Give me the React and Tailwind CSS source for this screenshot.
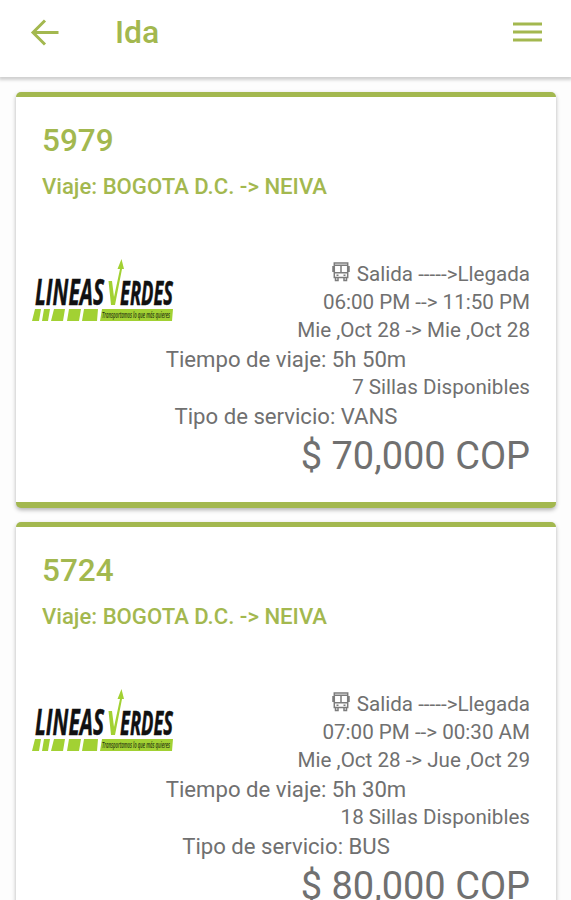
const trips = [
  { id: '5979', times: '06:00 PM --> 11:50 PM', dates: 'Mie ,Oct 28 -> Mie ,Oct 28', duration: '5h 50m', seats: 7, service: 'VANS', price: '70,000' },
  { id: '5724', times: '07:00 PM --> 00:30 AM', dates: 'Mie ,Oct 28 -> Jue ,Oct 29', duration: '5h 30m', seats: 18, service: 'BUS', price: '80,000' },
];

function Logo() {
  return (
    <svg width="146" height="66" viewBox="0 0 146 66" className="block overflow-visible">
      <g fontFamily="'Open Sans', sans-serif" fontWeight="700" fontStyle="italic" fill="#111" stroke="#111" strokeWidth="0.5">
        <text x="3" y="45" fontSize="35" textLength="69" lengthAdjust="spacingAndGlyphs">LINEAS</text>
        <text x="88" y="45" fontSize="34" textLength="53" lengthAdjust="spacingAndGlyphs">ERDES</text>
      </g>
      <path d="M76.5 21h3.500l2 16 6-28h-2.500l4-10 2.500 10h-2l-7 36h-4z" fill="#a2d133" />
      <path d="M3 49h6l-2 12H0zM12 49h6l-2 12h-6zM22 49h11l-2 12H19zM37 49h12l-2 12H35zM52 49h14l-1 12H50zM70 49h71l-1 12H68z" fill="#a2d133" />
      <text x="70" y="58" fontFamily="'Open Sans', sans-serif" fontSize="8.500" fontWeight="600" fontStyle="italic" fill="#2c3b12" textLength="68" lengthAdjust="spacingAndGlyphs">Transportamos lo que más quieres</text>
    </svg>
  );
}

function BusIcon() {
  return (
    <svg width="18" height="20" viewBox="0 0 18 20" fill="none" stroke="#7c7c7c" strokeWidth="1.5" className="mr-[7px] -translate-y-[2px]">
      <path d="M2.300 1h13.400v14.500H2.300zM2.300 3.300h13.400M2.300 10.800h13.400M9 3.500v7M1 4v6M17 4v6M3.500 15.500v3h2.500v-3M12 15.500v3h2.500v-3M4.500 13.200h2M11.500 13.200h2" />
    </svg>
  );
}

function TripCard({ trip }) {
  return (
    <article className="mx-4 mb-[14px] flex h-[416px] w-[540px] shrink-0 flex-col rounded-[5px] border-t-[5px] border-b-[6px] border-[#a3b84f] bg-white shadow-[0_2px_4px_rgba(0,0,0,0.3)]">
      <header className="h-[163px] pl-[26px] pt-[24px] font-medium text-[#a3b84f]">
        <h2 className="h-[40px] text-[31.5px] leading-[40px] font-medium">{trip.id}</h2>
        <p className="mt-[10px] h-[30px] text-[22.15px] leading-[30px] whitespace-nowrap">Viaje: BOGOTA D.C. -&gt; NEIVA</p>
      </header>
      <div className="flex h-[84px] justify-between pr-[26px] pl-4 text-[20.6px]">
        <Logo />
        <div className="text-right leading-[28px] whitespace-nowrap">
          <p className="flex h-7 items-center justify-end">
            <BusIcon />
            <span>Salida <span>-----</span>&gt;Llegada</span>
          </p>
          <p>{trip.times}</p>
          <p>{trip.dates}</p>
        </div>
      </div>
      <p className="h-[30px] text-center text-[22.15px] leading-[30px]">Tiempo de viaje: {trip.duration}</p>
      <p className="h-[27px] pr-[26px] text-right text-[20.6px] leading-[27px]">{trip.seats} Sillas Disponibles</p>
      <p className="h-[31px] text-center text-[22.15px] leading-[30px]">Tipo de servicio: {trip.service}</p>
      <p className="h-[48px] pr-[26px] text-right text-[38px] leading-[48px]">$ {trip.price} COP</p>
    </article>
  );
}

export default function App() {
  return (
    <div className="flex h-[900px] w-[571px] flex-col overflow-hidden bg-[#fdfdfd] font-['Roboto',sans-serif] text-[#707070]">
      <header className="flex h-[77px] shrink-0 items-start bg-white pt-[12px] pr-[28px] pl-[30px] text-[#a3b84f] shadow-[0_2px_3px_1px_rgba(0,0,0,0.18)]">
        <svg width="30" height="40" viewBox="0 0 30 40" fill="none" stroke="currentColor" strokeWidth="3">
          <path d="M28.500 20.500H4M15 8.500L3 20.500l12 12" />
        </svg>
        <h1 className="ml-[55px] flex-1 text-[32px] leading-[40px] font-medium">Ida</h1>
        <svg width="30" height="40" viewBox="0 0 30 40" fill="none" stroke="currentColor" strokeWidth="3">
          <path d="M0 12h29M0 20h29M0 28h29" />
        </svg>
      </header>
      <main className="flex flex-col pt-[15px]">
        {trips.map((trip) => <TripCard key={trip.id} trip={trip} />)}
      </main>
    </div>
  );
}
